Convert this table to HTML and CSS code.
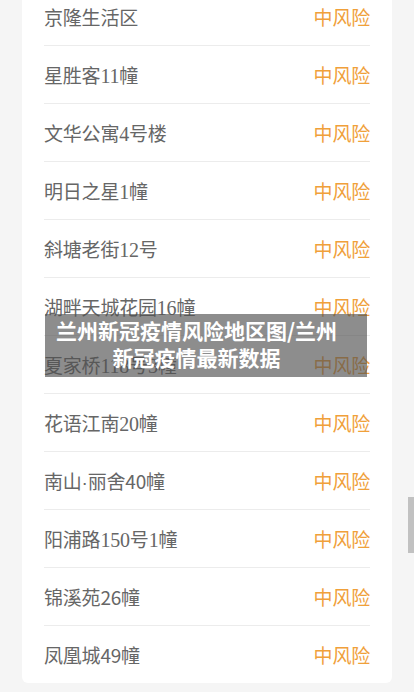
FILE: index.html
```html
<!DOCTYPE html>
<html lang="zh">
<head>
<meta charset="utf-8">
<title>兰州新冠疫情风险地区图</title>
<link rel="stylesheet" href="styles.css">
</head>
<body>
<div class="page">
  <ul class="card">
    <li class="row"><span class="name">京隆生活区</span><span class="risk">中风险</span></li>
    <li class="row"><span class="name">星胜客<span class="num">11</span>幢</span><span class="risk">中风险</span></li>
    <li class="row"><span class="name">文华公寓<span class="num">4</span>号楼</span><span class="risk">中风险</span></li>
    <li class="row"><span class="name">明日之星<span class="num">1</span>幢</span><span class="risk">中风险</span></li>
    <li class="row"><span class="name">斜塘老街<span class="num">12</span>号</span><span class="risk">中风险</span></li>
    <li class="row"><span class="name">湖畔天城花园<span class="num">16</span>幢</span><span class="risk">中风险</span></li>
    <li class="row"><span class="name">夏家桥<span class="num">118</span>号<span class="num">3</span>幢</span><span class="risk">中风险</span></li>
    <li class="row"><span class="name">花语江南<span class="num">20</span>幢</span><span class="risk">中风险</span></li>
    <li class="row"><span class="name">南山<span class="dot">·</span>丽舍40幢</span><span class="risk">中风险</span></li>
    <li class="row"><span class="name">阳浦路<span class="num">150</span>号<span class="num">1</span>幢</span><span class="risk">中风险</span></li>
    <li class="row"><span class="name">锦溪苑26幢</span><span class="risk">中风险</span></li>
    <li class="row"><span class="name">凤凰城49幢</span><span class="risk">中风险</span></li>
  </ul>
  <div class="banner">兰州新冠疫情风险地区图/兰州新冠疫情最新数据</div>
  <div class="scroll-thumb"></div>
</div>
</body>
</html>
```
FILE: styles.css
```css
html, body {
  margin: 0;
  padding: 0;
  background: #f5f5f5;
  height: 692px;
  overflow: hidden;
}
body {
  font-family: "Noto Sans CJK SC", "Liberation Sans", sans-serif;
}
.page {
  position: relative;
  height: 692px;
  overflow: hidden;
}
.card {
  list-style: none;
  margin: -12px 22px 0 22px;
  padding: 0 22px;
  background: #fff;
  border-radius: 0 0 6px 6px;
}
.row {
  display: flex;
  justify-content: space-between;
  align-items: center;
  height: 57px;
  border-bottom: 1px solid #ececec;
  font-size: 19px;
  letter-spacing: -0.2px;
}
.row:last-child {
  border-bottom: none;
}
.name {
  color: #666;
}
.num {
  font-family: "Liberation Serif", serif;
  font-size: 20px;
}
.dot {
  font-family: "Liberation Sans", sans-serif;
}
.risk {
  color: #f0a03a;
}
.banner {
  position: absolute;
  left: 45px;
  top: 314px;
  width: 322px;
  height: 63px;
  box-sizing: border-box;
  padding: 3px 28px 0 9px;
  background: rgba(80, 80, 80, 0.65);
  color: #fff;
  font-weight: 700;
  font-size: 21px;
  line-height: 27px;
  text-align: center;
}
.scroll-thumb {
  position: absolute;
  right: 0;
  top: 497px;
  width: 6px;
  height: 56px;
  background: #c1c1c1;
}
```
